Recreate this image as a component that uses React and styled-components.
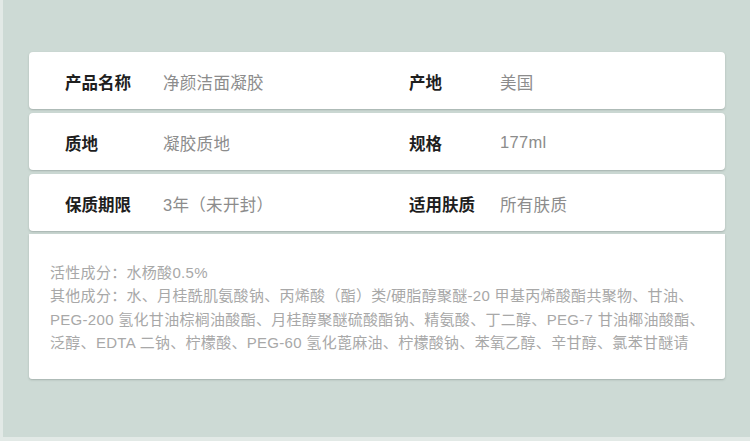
import React from "react";
import styled, { createGlobalStyle } from "styled-components";

const Global = createGlobalStyle`
  html, body { margin: 0; padding: 0; }
  body {
    background: #e2e9e6;
    font-family: "Liberation Sans", "Noto Sans CJK SC", sans-serif;
  }
`;

const Page = styled.div`
  width: 747px;
  height: 437px;
  margin-left: 3px;
  background: #cddad5;
  box-sizing: border-box;
  padding: 52px 25px 0 26px;
  display: flex;
  flex-direction: column;
  gap: 4px;
`;

const Card = styled.div`
  background: #ffffff;
  border-radius: 4px;
  box-shadow: 0 1px 2px rgba(90, 100, 96, 0.35);
`;

const InfoRow = styled(Card)`
  height: 57px;
  display: grid;
  grid-template-columns: 98px 246px 91px 1fr;
  align-items: center;
  padding-left: 36px;
  padding-top: 2px;
  box-sizing: border-box;
`;

const Label = styled.div`
  font-size: 16.5px;
  font-weight: 700;
  color: #1e1e1e;
`;

const Value = styled.div`
  font-size: 16.5px;
  color: #8c8c8c;
  letter-spacing: 0.3px;
`;

const Ingredients = styled(Card)`
  height: 145px;
  margin-top: -1px;
  box-sizing: border-box;
  padding: 27px 0 0 21px;
  border-radius: 0 0 3px 3px;
`;

const Line = styled.div`
  font-size: 15px;
  line-height: 23.3px;
  letter-spacing: 0.3px;
  color: #a8a8a8;
  white-space: nowrap;
`;

const rows = [
  ["产品名称", "净颜洁面凝胶", "产地", "美国"],
  ["质地", "凝胶质地", "规格", "177ml"],
  ["保质期限", "3年（未开封）", "适用肤质", "所有肤质"],
];

const lines = [
  "活性成分：水杨酸0.5%",
  "其他成分：水、月桂酰肌氨酸钠、丙烯酸（酯）类/硬脂醇聚醚-20 甲基丙烯酸酯共聚物、甘油、",
  "PEG-200 氢化甘油棕榈油酸酯、月桂醇聚醚硫酸酯钠、精氨酸、丁二醇、PEG-7 甘油椰油酸酯、",
  "泛醇、EDTA 二钠、柠檬酸、PEG-60 氢化蓖麻油、柠檬酸钠、苯氧乙醇、辛甘醇、氯苯甘醚请",
];

export default function App() {
  return (
    <>
      <Global />
      <Page>
        {rows.map((r, i) => (
          <InfoRow key={i}>
            <Label>{r[0]}</Label>
            <Value>{r[1]}</Value>
            <Label>{r[2]}</Label>
            <Value>{r[3]}</Value>
          </InfoRow>
        ))}
        <Ingredients>
          {lines.map((l, i) => (
            <Line key={i}>{l}</Line>
          ))}
        </Ingredients>
      </Page>
    </>
  );
}
